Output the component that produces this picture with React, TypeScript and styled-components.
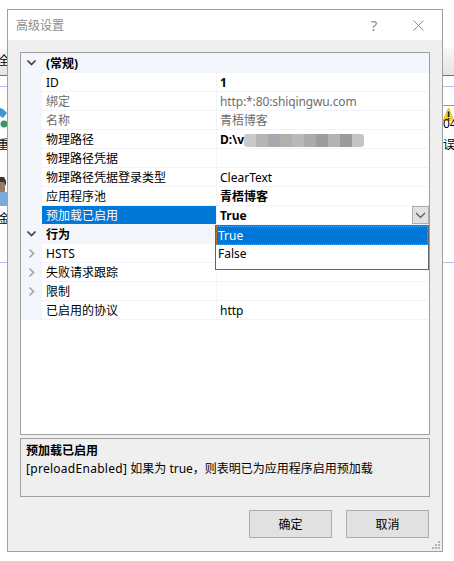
import React from 'react';
import styled, { createGlobalStyle } from 'styled-components';

const FONT = '"Noto Sans", "Noto Sans CJK SC", sans-serif';

const GlobalStyle = createGlobalStyle`
  html, body {
    margin: 0;
    padding: 0;
    background: #fff;
  }
  body {
    font-family: ${FONT};
    font-size: 12px;
    color: #000;
  }
`;

const Desktop = styled.div`
  display: flex;
  width: 454px;
  height: 561px;
  overflow: hidden;
  background: #fff;
`;

// strips of the window that sits behind the dialog
const Strip = styled.div<{ $width: number }>`
  flex: none;
  width: ${({ $width }) => $width}px;
  overflow: hidden;
  display: flex;
  flex-direction: column;
`;

const StripToolbar = styled.div`
  height: 27px;
  flex: none;
  margin-top: 48px;
  background: linear-gradient(#f7f7f7, #e4e4e4);
  border-bottom: 1px solid #6f6f7c;
  line-height: 25px;
  white-space: nowrap;
`;

const StripRule = styled.div<{ $top: number; $color?: string }>`
  height: 1px;
  flex: none;
  margin-top: ${({ $top }) => $top}px;
  background: ${({ $color }) => $color || '#a9bfe6'};
`;

const StripText = styled.div<{ $top: number; $shift?: number }>`
  height: 16px;
  flex: none;
  margin-top: ${({ $top }) => $top}px;
  margin-left: ${({ $shift }) => $shift || 0}px;
  line-height: 16px;
  white-space: nowrap;
`;

const ClippedChar = styled.span`
  margin-left: -2px;
  margin-right: -3px;
`;

const StripIcon = styled.svg<{ $top: number }>`
  display: block;
  flex: none;
  margin-top: ${({ $top }) => $top}px;
`;

const Dialog = styled.div`
  flex: none;
  width: 434px;
  height: 541px;
  margin: 9px 0 0;
  border: 1px solid #a0a0a0;
  background: #efefef;
  display: flex;
  flex-direction: column;
  position: relative;
`;

const TitleBar = styled.div`
  height: 30px;
  flex: none;
  background: #fff;
  display: flex;
  align-items: center;
  padding-left: 8px;
  padding-right: 18px;
  color: #8c8c8c;
  line-height: 30px;
`;

const TitleText = styled.span`
  flex: 1;
  padding-top: 2px;
`;

const HelpMark = styled.span`
  width: 12px;
  margin-right: 33px;
  text-align: center;
  font-size: 15px;
  color: #8c8c8c;
`;

const Content = styled.div`
  flex: 1;
  padding: 12px 12px 0 12px;
  display: flex;
  flex-direction: column;
`;

const Grid = styled.div`
  height: 381px;
  flex: none;
  border: 1px solid #a0a0a0;
  background: #fff;
  position: relative;
`;

const GroupRow = styled.div<{ $first?: boolean }>`
  box-sizing: border-box;
  height: ${({ $first }) => ($first ? 20 : 19)}px;
  padding-bottom: ${({ $first }) => ($first ? 0 : 2)}px;
  display: flex;
  align-items: center;
  background: #f3f6fb;
  font-weight: 700;
`;

const Gutter = styled.div`
  width: 21px;
  height: 100%;
  flex: none;
  background: #f3f6fb;
  display: flex;
  align-items: center;
  justify-content: center;
`;

const Row = styled.div`
  height: 18px;
  display: flex;
  border-bottom: 1px solid #f1f4fa;
`;

const Name = styled.div<{ $muted?: boolean; $selected?: boolean }>`
  width: 170px;
  flex: none;
  padding-left: 4px;
  line-height: 20px;
  white-space: nowrap;
  border-right: 1px solid #f1f4fa;
  color: ${({ $muted, $selected }) =>
    $selected ? '#fff' : $muted ? '#6d6d6d' : '#000'};
  background: ${({ $selected }) => ($selected ? '#0078d7' : 'transparent')};
`;

const Value = styled.div<{ $bold?: boolean; $muted?: boolean }>`
  box-sizing: border-box;
  flex: 1;
  min-width: 0;
  padding: 2px 0 0 3px;
  display: flex;
  align-items: center;
  line-height: 18px;
  white-space: nowrap;
  letter-spacing: ${({ $muted }) => ($muted ? '-0.12px' : 'normal')};
  font-weight: ${({ $bold }) => ($bold ? 700 : 400)};
  color: ${({ $muted }) => ($muted ? '#6d6d6d' : '#000')};
`;

const Mosaic = styled.span`
  display: flex;
  height: 13px;
  border-radius: 3px;
  overflow: hidden;
  filter: blur(0.6px);
`;

const MosaicCell = styled.span<{ $color: string }>`
  width: 12px;
  background: ${({ $color }) => $color};
`;

const SelectCaret = styled.div`
  width: 15px;
  height: 16px;
  flex: none;
  border: 1px solid #adadad;
  background: #e1e1e1;
  display: flex;
  align-items: center;
  justify-content: center;
`;

const GroupLabel = styled.span`
  padding-left: 4px;
`;

const Dropdown = styled.div`
  position: absolute;
  left: 194px;
  top: 172px;
  width: 212px;
  height: 43px;
  border: 1px solid #646464;
  background: #fff;
`;

const Option = styled.div<{ $active?: boolean }>`
  height: ${({ $active }) => ($active ? '19px' : '18px')};
  padding-left: 2px;
  line-height: ${({ $active }) => ($active ? '19px' : '17px')};
  color: ${({ $active }) => ($active ? '#fff' : '#000')};
  background: ${({ $active }) => ($active ? '#0078d7' : 'transparent')};
  outline: ${({ $active }) => ($active ? '1px dotted #e08a2c' : 'none')};
  outline-offset: -1px;
`;

const Description = styled.div`
  height: 52px;
  flex: none;
  margin-top: 3px;
  border: 1px solid #a0a0a0;
  padding: 3px 5px 2px;
  line-height: 18px;
`;

const DescriptionTitle = styled.div`
  font-weight: 700;
`;

const PropertyKey = styled.span`
  letter-spacing: 0.28px;
`;

const Actions = styled.div`
  display: flex;
  justify-content: flex-end;
  gap: 14px;
  margin-top: 13px;
  padding-right: 1px;
`;

const Button = styled.button`
  width: 83px;
  height: 28px;
  padding: 0;
  border: 1px solid #adadad;
  border-radius: 0;
  background: #e1e1e1;
  font-family: ${FONT};
  font-size: 12px;
  color: #000;
`;

const Grip = styled.svg`
  position: absolute;
  right: 1px;
  bottom: 1px;
`;

const ChevronDown = () => (
  <svg width="11" height="8" viewBox="0 0 11 8">
    <path d="M1.5 1.5 L5.5 5.5 L9.5 1.5" fill="none" stroke="#3f3f3f" strokeWidth="1.7" />
  </svg>
);

const ChevronRight = () => (
  <svg width="8" height="11" viewBox="0 0 8 11">
    <path d="M1.5 1.5 L5.5 5.5 L1.5 9.5" fill="none" stroke="#a6a6a6" strokeWidth="1.7" />
  </svg>
);

const CloseIcon = () => (
  <svg width="11" height="11" viewBox="0 0 11 11">
    <path d="M0.5 0.5 L10.5 10.5 M10.5 0.5 L0.5 10.5" fill="none" stroke="#8c8c8c" strokeWidth="1" />
  </svg>
);

const mosaicColors = [
  '#c9c9cb',
  '#b5b5b7',
  '#a9a9ad',
  '#b5afab',
  '#b9b9bb',
  '#acaaac',
  '#9d9d9f',
  '#b3b3b5',
  '#9b9b9d',
  '#c4c4c6',
];

const generalRows = [
  { name: 'ID', value: '1', bold: true },
  { name: '绑定', value: 'http:*:80:shiqingwu.com', muted: true },
  { name: '名称', value: '青梧博客', muted: true },
];

const App = () => (
  <>
    <GlobalStyle />
    <Desktop>
      <Strip $width={7}>
        <StripToolbar>
          <ClippedChar>全</ClippedChar>
        </StripToolbar>
        <StripRule $top={10} />
        <StripIcon $top={21} width="7" height="20" viewBox="0 0 7 20">
          <path d="M0 0 L3 1 L7 5 L3 10 L0 8 Z" fill="#3f97d6" />
          <circle cx="4" cy="16" r="3.5" fill="#3c9a52" />
          <circle cx="3" cy="15" r="1.5" fill="#3f7fd6" />
        </StripIcon>
        <StripText $top={9} $shift={-3}>重</StripText>
        <StripIcon $top={24} width="7" height="29" viewBox="0 0 7 29">
          <rect x="0" y="15" width="7" height="14" fill="#7da9d6" />
          <rect x="0" y="3" width="5" height="12" fill="#9a7a62" />
          <path d="M0 0 H4 L6 4 V9 L4 5 H0 Z" fill="#3a3533" />
        </StripIcon>
        <StripText $top={5} $shift={-2}>金</StripText>
        <StripRule $top={35} />
      </Strip>
      <Dialog>
        <TitleBar>
          <TitleText>高级设置</TitleText>
          <HelpMark>?</HelpMark>
          <CloseIcon />
        </TitleBar>
        <Content>
          <Grid>
            <GroupRow $first>
              <Gutter>
                <ChevronDown />
              </Gutter>
              <GroupLabel>(常规)</GroupLabel>
            </GroupRow>
            {generalRows.map((r) => (
              <Row key={r.name}>
                <Gutter />
                <Name $muted={r.muted}>{r.name}</Name>
                <Value $bold={r.bold} $muted={r.muted}>
                  {r.value}
                </Value>
              </Row>
            ))}
            <Row>
              <Gutter />
              <Name>物理路径</Name>
              <Value $bold>
                D:\v
                <Mosaic>
                  {mosaicColors.map((c, i) => (
                    <MosaicCell key={i} $color={c} />
                  ))}
                </Mosaic>
              </Value>
            </Row>
            <Row>
              <Gutter />
              <Name>物理路径凭据</Name>
              <Value />
            </Row>
            <Row>
              <Gutter />
              <Name>物理路径凭据登录类型</Name>
              <Value>ClearText</Value>
            </Row>
            <Row>
              <Gutter />
              <Name>应用程序池</Name>
              <Value $bold>青梧博客</Value>
            </Row>
            <Row>
              <Gutter />
              <Name $selected>预加载已启用</Name>
              <Value $bold>True</Value>
              <SelectCaret>
                <svg width="11" height="7" viewBox="0 0 11 7">
                  <path d="M1 1 L5.5 5.5 L10 1" fill="none" stroke="#555" strokeWidth="1.2" />
                </svg>
              </SelectCaret>
            </Row>
            <GroupRow>
              <Gutter>
                <ChevronDown />
              </Gutter>
              <GroupLabel>行为</GroupLabel>
            </GroupRow>
            <Row>
              <Gutter>
                <ChevronRight />
              </Gutter>
              <Name>HSTS</Name>
              <Value />
            </Row>
            <Row>
              <Gutter>
                <ChevronRight />
              </Gutter>
              <Name>失败请求跟踪</Name>
              <Value />
            </Row>
            <Row>
              <Gutter>
                <ChevronRight />
              </Gutter>
              <Name>限制</Name>
              <Value />
            </Row>
            <Row>
              <Gutter />
              <Name>已启用的协议</Name>
              <Value>http</Value>
            </Row>
            <Dropdown>
              <Option $active>True</Option>
              <Option>False</Option>
            </Dropdown>
          </Grid>
          <Description>
            <DescriptionTitle>预加载已启用</DescriptionTitle>
            <div>
              <PropertyKey>[preloadEnabled]</PropertyKey> 如果为 true，则表明已为应用程序启用预加载
            </div>
          </Description>
          <Actions>
            <Button>确定</Button>
            <Button>取消</Button>
          </Actions>
        </Content>
        <Grip width="9" height="9" viewBox="0 0 9 9">
          <path d="M6 0h2v2H6z M3 3h2v2H3z M6 3h2v2H6z M0 6h2v2H0z M3 6h2v2H3z M6 6h2v2H6z" fill="#b5b5b5" />
        </Grip>
      </Dialog>
      <Strip $width={11}>
        <StripToolbar />
        <StripRule $top={10} />
        <StripRule $top={18} $color="#8d9aab" />
        <StripIcon $top={2} width="11" height="13" viewBox="0 0 11 13">
          <path d="M5.5 0 L11 13 H0 Z" fill="#f5d327" stroke="#c9a514" strokeWidth="0.6" />
          <rect x="4.8" y="3.5" width="1.6" height="5.5" fill="#222" />
          <rect x="4.8" y="10" width="1.6" height="1.6" fill="#222" />
        </StripIcon>
        <StripText $top={-5}>04</StripText>
        <StripText $top={5}>误</StripText>
        <StripRule $top={109} />
      </Strip>
    </Desktop>
  </>
);

export default App;
